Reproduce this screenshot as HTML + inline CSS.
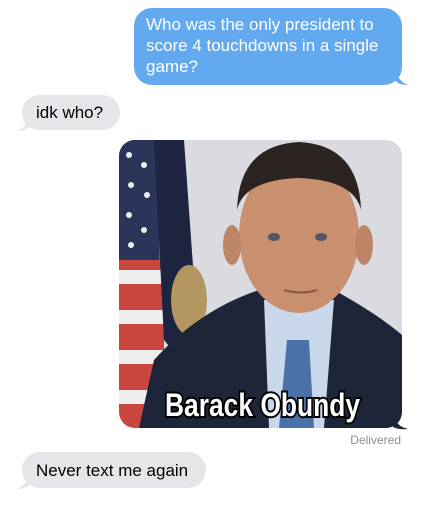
<!DOCTYPE html>
<html><head><meta charset="utf-8"><style>
body{margin:0;width:435px;height:511px;background:#fff;font-family:"Liberation Sans",sans-serif;position:relative;overflow:hidden}
.b{position:absolute;font-size:17px;line-height:21px}
.blue{left:134px;top:8px;width:268px;height:77px;background:#63a9f0;border-radius:18px;color:#fff;box-sizing:border-box;padding:6px 12px}
.gray{background:#e5e5ea;color:#000;border-radius:18px;box-sizing:border-box;padding:7px 14px}
.del{position:absolute;right:34px;top:433px;font-size:12px;color:#8e8e93}
</style></head><body>
<div class="b blue">Who was the only president to score 4 touchdowns in a single game?</div>
<svg style="position:absolute;left:395px;top:70px" width="14" height="16"><path d="M0 0 Q4 12 13 15 Q3 15 0 10Z" fill="#63a9f0"/></svg>
<div class="b gray" style="left:22px;top:95px;width:98px;height:35px">idk who?</div>
<svg style="position:absolute;left:16px;top:116px" width="14" height="16"><path d="M14 0 Q10 12 1 15 Q11 15 14 10Z" fill="#e5e5ea"/></svg>
<svg style="position:absolute;left:119px;top:140px" width="290" height="290" viewBox="0 0 290 290">
<defs><clipPath id="c"><rect x="0" y="0" width="283" height="288" rx="16"/></clipPath></defs>
<g clip-path="url(#c)">
<rect width="283" height="288" fill="#d9dbe0"/>
<rect x="0" y="0" width="45" height="288" fill="#c9473f"/>
<rect x="0" y="10" width="45" height="12" fill="#eee"/><rect x="0" y="40" width="45" height="12" fill="#eee"/>
<rect x="0" y="130" width="45" height="14" fill="#eee"/><rect x="0" y="170" width="45" height="14" fill="#eee"/><rect x="0" y="210" width="45" height="14" fill="#eee"/><rect x="0" y="250" width="45" height="14" fill="#eee"/>
<rect x="0" y="0" width="40" height="120" fill="#2a3559"/>
<g fill="#eee"><circle cx="10" cy="15" r="3"/><circle cx="25" cy="25" r="3"/><circle cx="12" cy="45" r="3"/><circle cx="28" cy="55" r="3"/><circle cx="10" cy="75" r="3"/><circle cx="25" cy="90" r="3"/><circle cx="12" cy="105" r="3"/></g>
<path d="M35 0 L65 0 L75 140 L90 200 L70 230 L45 200 Z" fill="#1d2540"/>
<ellipse cx="70" cy="160" rx="18" ry="35" fill="#b49660"/>
<path d="M20 288 L35 220 Q80 170 140 150 L215 150 Q260 175 283 195 L283 288Z" fill="#1f2538"/>
<path d="M145 160 L215 160 L205 288 L150 288Z" fill="#c8d8ea"/>
<path d="M168 200 L190 200 L195 288 L160 288Z" fill="#4a72a8"/>
<ellipse cx="180" cy="95" rx="60" ry="78" fill="#c99070"/>
<path d="M118 70 Q120 5 180 2 Q240 5 242 70 Q235 40 180 38 Q125 40 118 70Z" fill="#2b2420"/>
<ellipse cx="113" cy="105" rx="9" ry="20" fill="#bd8465"/><ellipse cx="245" cy="105" rx="9" ry="20" fill="#bd8465"/>
<ellipse cx="155" cy="97" rx="6" ry="4" fill="#556"/><ellipse cx="202" cy="97" rx="6" ry="4" fill="#556"/>
<path d="M165 150 Q182 155 198 150" stroke="#8a5545" stroke-width="2" fill="none"/>
<text x="46" y="276" textLength="195" lengthAdjust="spacingAndGlyphs" font-family="'Liberation Sans',sans-serif" font-weight="bold" font-size="32" fill="#fff" stroke="#000" stroke-width="4" paint-order="stroke">Barack Obundy</text>
</g>
<path d="M276 280 Q280 287 289 289 Q280 290 274 287Z" fill="#1f2538"/>
</svg>
<div class="del">Delivered</div>
<div class="b gray" style="left:22px;top:452px;width:184px;height:36px;padding-top:8px">Never text me again</div>
<svg style="position:absolute;left:16px;top:474px" width="14" height="16"><path d="M14 0 Q10 12 1 15 Q11 15 14 10Z" fill="#e5e5ea"/></svg>
</body></html>
